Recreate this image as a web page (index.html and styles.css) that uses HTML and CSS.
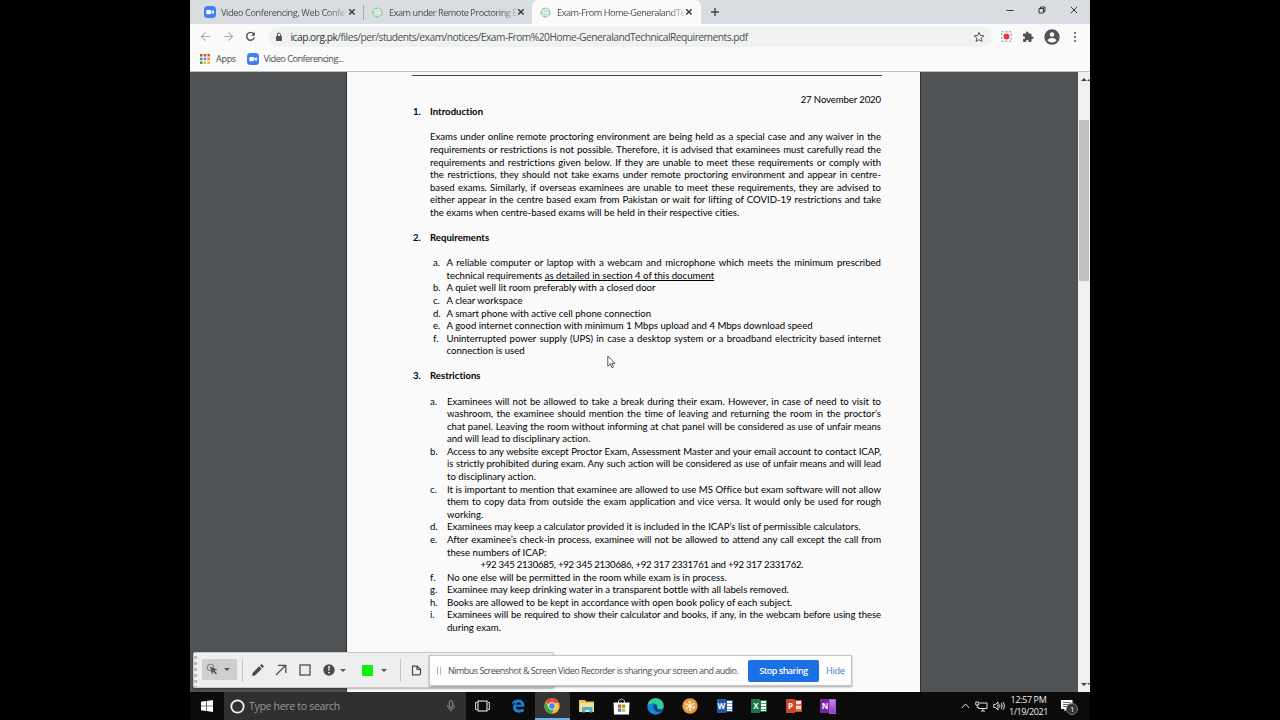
FILE: index.html
```html
<!DOCTYPE html>
<html lang="en">
<head>
  <meta charset="UTF-8">
  <meta name="viewport" content="width=device-width, initial-scale=1.0">
  <title>Exam-From Home-GeneralandTechnicalRequirements</title>
  <link rel="stylesheet" href="styles.css">
</head>
<body>

<div class="screen">
  <div class="tab-strip">
    <div class="tab">
      <svg class="favicon" viewBox="0 0 12 12"><rect width="12" height="12" rx="3.5" fill="#3f82ee"/><rect x="2.3" y="4" width="4.8" height="4.2" rx="1" fill="#fff"/><path d="M7.5 5.6 9.8 4v4.2L7.5 6.7z" fill="#fff"/></svg>
      <span class="tab-title">Video Conferencing, Web Confe</span>
      <svg class="tab-close" viewBox="0 0 8 8"><path d="M1.2 1.2l5.4 5.4M6.6 1.2L1.2 6.6"/></svg>
    </div>
    <div class="tab second">
      <svg class="favicon" viewBox="0 0 12 12"><circle cx="6" cy="6" r="4.8" fill="#e4f1e9" stroke="#7cc79b" stroke-width="1.2" stroke-dasharray="5 1"/><path d="M3.5 6.5Q6 2 8.5 6M4.5 8.5h3" fill="none" stroke="#a3d5b7"/></svg>
      <span class="tab-title">Exam under Remote Proctoring E</span>
      <svg class="tab-close" viewBox="0 0 8 8"><path d="M1.2 1.2l5.4 5.4M6.6 1.2L1.2 6.6"/></svg>
    </div>
    <div class="tab current">
      <svg class="favicon" viewBox="0 0 12 12"><circle cx="6" cy="6" r="4.8" fill="#e4f1e9" stroke="#7cc79b" stroke-width="1.2" stroke-dasharray="5 1"/><path d="M3.5 6.5Q6 2 8.5 6M4.5 8.5h3" fill="none" stroke="#a3d5b7"/></svg>
      <span class="tab-title">Exam-From Home-GeneralandTe</span>
      <svg class="tab-close" viewBox="0 0 8 8"><path d="M1.2 1.2l5.4 5.4M6.6 1.2L1.2 6.6"/></svg>
    </div>
    <svg class="new-tab" viewBox="0 0 10 10"><path d="M5 1v8M1 5h8"/></svg>
    <div class="window-buttons">
      <svg viewBox="0 0 8 8"><path d="M.5 4.5h7"/></svg>
      <svg viewBox="0 0 8 8"><path d="M1 2.5h4.5V7H1zM2.5 2.5V1H7v4.5H5.5"/></svg>
      <svg viewBox="0 0 8 8"><path d="M.8.8l6.4 6.4M7.2.8L.8 7.2"/></svg>
    </div>
  </div>

  <div class="toolbar">
    <svg class="nav-icon off" viewBox="0 0 12 12"><path d="M11 6H1.5M6 1.5L1.5 6 6 10.5"/></svg>
    <svg class="nav-icon off" viewBox="0 0 12 12"><path d="M1 6h9.5M6 1.5L10.5 6 6 10.5"/></svg>
    <svg class="nav-icon" viewBox="0 0 12 12"><path d="M9.6 3.2A4.3 4.3 0 1 0 10.3 7"/><path d="M10.8 1v4.2H6.6z" class="solid"/></svg>
    <div class="address">
      <svg class="lock" viewBox="0 0 8 10"><rect x="1" y="4" width="6" height="5" rx=".6" fill="#555"/><path d="M2.4 4V2.7a1.6 1.6 0 0 1 3.2 0V4" fill="none" stroke="#555" stroke-width="1"/></svg>
      <span class="url"><b>icap.org.pk</b>/files/per/students/exam/notices/Exam-From%20Home-GeneralandTechnicalRequirements.pdf</span>
      <svg class="star" viewBox="0 0 12 12"><path d="M6 1.3l1.4 3.2 3.5.3-2.7 2.3.8 3.4-3-1.8-3 1.8.8-3.4L1.1 4.8l3.5-.3z"/></svg>
    </div>
    <div class="extensions">
      <svg width="11" height="11" viewBox="0 0 11 11"><rect x=".8" y=".8" width="9.4" height="9.4" fill="none" stroke="#4d8c91" stroke-width="1" stroke-dasharray="1.8 2"/><circle cx="5.5" cy="5.5" r="3" fill="#e53943"/></svg>
      <svg width="12" height="12" viewBox="0 0 24 24"><path fill="#4f5256" d="M20.5 11H19V7a2 2 0 0 0-2-2h-4V3.5a2.5 2.5 0 0 0-5 0V5H4a2 2 0 0 0-2 2v3.8h1.5a2.7 2.7 0 0 1 0 5.4H2V20a2 2 0 0 0 2 2h3.8v-1.5a2.7 2.7 0 0 1 5.4 0V22H17a2 2 0 0 0 2-2v-4h1.5a2.5 2.5 0 0 0 0-5z"/></svg>
      <svg width="16" height="16" viewBox="0 0 16 16"><circle cx="8" cy="8" r="7.7" fill="#4f5256"/><circle cx="8" cy="5.5" r="2.3" fill="#fafafa"/><path d="M3.3 11.2Q4.8 9 8 9t4.7 2.2Q11 13.5 8 13.5t-4.7-2.3z" fill="#fafafa"/></svg>
      <svg class="menu" width="4" height="12" viewBox="0 0 4 12"><g fill="#4f5256"><circle cx="2" cy="2" r="1"/><circle cx="2" cy="6" r="1"/><circle cx="2" cy="10" r="1"/></g></svg>
    </div>
  </div>

  <div class="bookmarks">
    <svg width="10" height="10" viewBox="0 0 10 10"><g fill="#dc4437"><path d="M0 0h2.5v2.5H0zM3.7 0h2.5v2.5H3.7zM7.4 0h2.5v2.5H7.4z"/></g><path fill="#3b9b58" d="M0 3.7h2.5v2.5H0z"/><path fill="#4285f4" d="M3.7 3.7h2.5v2.5H3.7z"/><path fill="#e98a1d" d="M7.4 3.7h2.5v2.5H7.4z"/><path fill="#3b9b58" d="M0 7.4h2.5v2.5H0z"/><path fill="#f0b51c" d="M3.7 7.4h2.5v2.5H3.7zM7.4 7.4h2.5v2.5H7.4z"/></svg>
    <span class="apps">Apps</span>
    <svg class="favicon" viewBox="0 0 12 12"><rect width="12" height="12" rx="3.5" fill="#3f82ee"/><rect x="2.3" y="4" width="4.8" height="4.2" rx="1" fill="#fff"/><path d="M7.5 5.6 9.8 4v4.2L7.5 6.7z" fill="#fff"/></svg>
    <span class="bookmark">Video Conferencing...</span>
  </div>

  <div class="viewer">
    <div class="page">
      <div class="rule"></div>
      <div class="date">27 November 2020</div>

      <h2><span>1.</span>Introduction</h2>
      <div class="paragraph">
        <p class="full">Exams under online remote proctoring environment are being held as a special case and any waiver in the</p>
        <p class="full">requirements or restrictions is not possible. Therefore, it is advised that examinees must carefully read the</p>
        <p class="full">requirements and restrictions given below. If they are unable to meet these requirements or comply with</p>
        <p class="full">the restrictions, they should not take exams under remote proctoring environment and appear in centre-</p>
        <p class="full">based exams. Similarly, if overseas examinees are unable to meet these requirements, they are advised to</p>
        <p class="full">either appear in the centre based exam from Pakistan or wait for lifting of COVID-19 restrictions and take</p>
        <p>the exams when centre-based exams will be held in their respective cities.</p>
      </div>

      <h2><span>2.</span>Requirements</h2>
      <div class="list requirements">
        <div class="item"><span>a.</span><div>
          <p class="full">A reliable computer or laptop with a webcam and microphone which meets the minimum prescribed</p>
          <p>technical requirements <u>as detailed in section 4 of this document</u></p>
        </div></div>
        <div class="item"><span>b.</span><div><p>A quiet well lit room preferably with a closed door</p></div></div>
        <div class="item"><span>c.</span><div><p>A clear workspace</p></div></div>
        <div class="item"><span>d.</span><div><p>A smart phone with active cell phone connection</p></div></div>
        <div class="item"><span>e.</span><div><p>A good internet connection with minimum 1 Mbps upload and 4 Mbps download speed</p></div></div>
        <div class="item"><span>f.</span><div>
          <p class="full">Uninterrupted power supply (UPS) in case a desktop system or a broadband electricity based internet</p>
          <p>connection is used</p>
        </div></div>
      </div>

      <h2><span>3.</span>Restrictions</h2>
      <div class="list">
        <div class="item"><span>a.</span><div>
          <p class="full">Examinees will not be allowed to take a break during their exam. However, in case of need to visit to</p>
          <p class="full">washroom, the examinee should mention the time of leaving and returning the room in the proctor’s</p>
          <p class="full">chat panel. Leaving the room without informing at chat panel will be considered as use of unfair means</p>
          <p>and will lead to disciplinary action.</p>
        </div></div>
        <div class="item"><span>b.</span><div>
          <p class="full tight">Access to any website except Proctor Exam, Assessment Master and your email account to contact ICAP,</p>
          <p class="full tight">is strictly prohibited during exam. Any such action will be considered as use of unfair means and will lead</p>
          <p>to disciplinary action.</p>
        </div></div>
        <div class="item"><span>c.</span><div>
          <p class="full">It is important to mention that examinee are allowed to use MS Office but exam software will not allow</p>
          <p class="full">them to copy data from outside the exam application and vice versa. It would only be used for rough</p>
          <p>working.</p>
        </div></div>
        <div class="item"><span>d.</span><div><p>Examinees may keep a calculator provided it is included in the ICAP’s list of permissible calculators.</p></div></div>
        <div class="item"><span>e.</span><div>
          <p class="full tight">After examinee’s check-in process, examinee will not be allowed to attend any call except the call from</p>
          <p>these numbers of ICAP:</p>
          <p class="phones">+92 345 2130685, +92 345 2130686, +92 317 2331761 and +92 317 2331762.</p>
        </div></div>
        <div class="item"><span>f.</span><div><p>No one else will be permitted in the room while exam is in process.</p></div></div>
        <div class="item"><span>g.</span><div><p>Examinee may keep drinking water in a transparent bottle with all labels removed.</p></div></div>
        <div class="item"><span>h.</span><div><p>Books are allowed to be kept in accordance with open book policy of each subject.</p></div></div>
        <div class="item"><span>i.</span><div>
          <p class="full tight">Examinees will be required to show their calculator and books, if any, in the webcam before using these</p>
          <p>during exam.</p>
        </div></div>
      </div>
    </div>

    <div class="scrollbar">
      <svg viewBox="0 0 12 6"><path d="M3 5l3-3 3 3zM9 5l2-2 1 1v1z"/></svg>
      <div class="thumb"></div>
      <svg viewBox="0 0 12 6"><path d="M3 1l3 3 3-3zM9 1l2 2 1-1V1z"/></svg>
    </div>
  </div>

  <div class="draw-tools">
    <div class="grip"></div>
    <div class="pick">
      <svg width="13" height="13" viewBox="0 0 13 13"><circle cx="4.5" cy="4.5" r="3.3" fill="none" stroke="#777"/><path d="M4 3.5l7.5 3.3-3 1 2.5 2.7-1.2 1-2.4-2.7-1.5 2.4z" fill="#555"/></svg>
      <i class="caret"></i>
    </div>
    <div class="divider"></div>
    <svg class="pencil" width="13" height="13" viewBox="0 0 13 13"><path d="M1 12l.8-3.3 6.4-6.4 2.5 2.5-6.4 6.4zM9 1.5l1-1q.6-.5 1.3.1l1.1 1.1q.6.7.1 1.3l-1 1z" fill="#4a4a4a"/></svg>
    <svg class="arrow" width="12" height="12" viewBox="0 0 12 12"><path d="M1 11L10.5 1.5M3 1.3h7.8V9" fill="none" stroke="#4a4a4a" stroke-width="1.3"/></svg>
    <svg class="square" width="12" height="12" viewBox="0 0 12 12"><rect x="1" y="1" width="10" height="10" fill="none" stroke="#4a4a4a" stroke-width="1.3"/></svg>
    <svg class="alert" width="12" height="12" viewBox="0 0 12 12"><circle cx="6" cy="6" r="5.7" fill="#4a4a4a"/><path d="M5.2 2h1.6l-.3 5h-1zM5.2 8h1.6v1.5H5.2z" fill="#eee"/></svg>
    <i class="caret"></i>
    <div class="swatch"></div>
    <i class="caret"></i>
    <div class="divider last"></div>
    <svg class="file" width="11" height="11" viewBox="0 0 11 11"><path d="M1.5 9.8V1.2h4.7l3.3 3v4.3q0 1.3-1.3 1.3zM6 1.5v3h3.5" fill="none" stroke="#44495f" stroke-width="1.2"/></svg>
  </div>

  <div class="share-bar">
    <div class="share-grip"></div>
    <span class="share-text">Nimbus Screenshot &amp; Screen Video Recorder is sharing your screen and audio.</span>
    <button class="stop">Stop sharing</button>
    <a class="hide">Hide</a>
  </div>

  <svg class="cursor" viewBox="0 0 9 14"><path d="M.8 1v10.2l2.5-2.3 1.7 3.9 1.5-.7-1.7-3.7H8z"/></svg>

  <div class="taskbar">
    <div class="start"><svg width="12" height="12" viewBox="0 0 12 12"><path d="M0 1.7L5 1v4.7H0zM5.6.9L12 0v5.7H5.6zM0 6.3h5V11l-5-.7zM5.6 6.3H12V12l-6.4-.9z" fill="#fff"/></svg></div>
    <div class="search">
      <svg width="15" height="15" viewBox="0 0 15 15"><circle cx="7.5" cy="7.5" r="6.2" fill="none" stroke="#f2f2f2" stroke-width="1.8"/></svg>
      <span>Type here to search</span>
      <svg width="8" height="12" viewBox="0 0 8 12"><rect x="2.3" y=".6" width="3.4" height="7" rx="1.7" fill="none" stroke="#999"/><path d="M.7 5v1.2a3.3 3.3 0 0 0 6.6 0V5M4 9.5v2" fill="none" stroke="#888"/></svg>
    </div>
    <div class="task view"><svg width="15" height="12" viewBox="0 0 15 12"><rect x="3" y="1" width="9" height="10" fill="none" stroke="#fff"/><path d="M2 2.5H.6v7H2M13 2.5h1.4v7H13" fill="none" stroke="#ddd"/></svg></div>
    <div class="task"><svg width="14" height="14" viewBox="0 0 14 14"><path d="M.5 6.2Q1.5.4 7.3.4q6.2.2 6.3 7.3H4.8q.3 3 3.9 3 2.2 0 4-1.1v3Q10.8 13.7 8 13.7 2 13.5 2 8q.1-3 3-4.6Q2 4 .5 6.2zM5 5.7h5.2Q10 3.2 7.6 3.2 5.3 3.3 5 5.7z" fill="#1683dc"/></svg></div>
    <div class="task open"><svg width="16" height="16" viewBox="0 0 16 16"><circle cx="8" cy="8" r="7.7" fill="#f4c42c"/><path d="M8 8L1.3 4.2A7.7 7.7 0 0 1 14.7 4.2L15 5H8z" fill="#e34a3a"/><path d="M1.3 4.2A7.7 7.7 0 0 0 7.7 15.7L10.7 9.8 8 8 4.8 9.5z" fill="#37a355"/><circle cx="8" cy="8" r="3.7" fill="#fff"/><circle cx="8" cy="8" r="2.9" fill="#4487ef"/></svg></div>
    <div class="task"><svg width="16" height="14" viewBox="0 0 16 14"><path d="M0 1h6l1 1.5h8V13H0z" fill="#eac35a"/><path d="M1 4h14v9H1z" fill="#f7df91"/><path d="M3 8h10.5v5.5h-3V11H6v2.5H3z" fill="#4bb3d2"/></svg></div>
    <div class="task"><svg width="17" height="17" viewBox="0 0 17 17"><path d="M5.5 5V2.5Q8.5-.5 11.5 2.5V5" fill="none" stroke="#bbb"/><path d="M.5 4.5h16l-.5 12H1z" fill="#fff"/><path d="M5 6.5h3.3v3.3H5z" fill="#e44f2b"/><path d="M9 6.5h3.3v3.3H9z" fill="#7db52c"/><path d="M5 10.5h3.3v3.3H5z" fill="#258fd9"/><path d="M9 10.5h3.3v3.3H9z" fill="#efb51f"/></svg></div>
    <div class="task"><svg width="17" height="17" viewBox="0 0 17 17"><circle cx="8.5" cy="8.5" r="8.2" fill="#1686d3"/><path d="M.5 7Q2 .3 8.5.3q7.5.2 8.2 7.5 0 3.2-3.5 3.5-3.7 0-3-2.3Q10 5.5 6 5.2 2.5 5.2.5 7z" fill="#3dca9a"/><path d="M6.2 7Q8.5 5 10.3 8q-.8 2.5 1.2 3.2 2.5.8 4.5-.4-1 3-4.5 3.6Q6 13.5 6.2 7z" fill="#0b4a8f"/></svg></div>
    <div class="task"><svg width="16" height="16" viewBox="0 0 16 16"><circle cx="8" cy="8" r="7.7" fill="#e9993a"/><path d="M8 3v10M3.7 5.5l8.6 5M12.3 5.5l-8.6 5" stroke="#fff2dd" stroke-width="1.3"/><circle cx="8" cy="8" r="4.5" fill="none" stroke="#fff2dd" stroke-dasharray="2 2.7"/></svg></div>
    <div class="task office word"><b>W</b><i></i></div>
    <div class="task office excel"><b>X</b><i></i></div>
    <div class="task office point"><b>P</b><i></i></div>
    <div class="task office note"><b>N</b><i></i></div>
    <div class="tray">
      <svg width="9" height="6" viewBox="0 0 9 6"><path d="M.8 5l3.7-4 3.7 4"/></svg>
      <svg width="13" height="11" viewBox="0 0 13 11"><path d="M4.5 2H12v5.5H3.5V6M6 10h4M8 7.5V10M.8 1h3v3h-3zM2.3 4v3"/></svg>
      <svg width="12" height="10" viewBox="0 0 12 10"><path d="M.7 3.5h1.8L5 1v8L2.5 6.5H.7zM6.5 3.5q1.2 1.5 0 3M8.2 2.2q2.3 2.8 0 5.6M9.8 1q3.2 4 0 8"/></svg>
    </div>
    <div class="clock"><span>12:57 PM</span><span>1/19/2021</span></div>
    <div class="notice">
      <svg width="12" height="12" viewBox="0 0 12 12"><path d="M0 0h11.5v9H6L3.5 11.5V9H0z" fill="#fff"/><path d="M2 2.5h7.5M2 4.5h7.5M2 6.5h5" stroke="#333" stroke-width=".7"/></svg>
      <span class="badge">1</span>
    </div>
  </div>
</div>

</body>
</html>
```
FILE: styles.css
```css
* {
  box-sizing: border-box;
}

body {
  margin: 0;
  background-color: #000;
  font-family: "Open Sans", "Noto Sans", sans-serif;
}

svg {
  display: block;
  flex: none;
}

.screen {
  position: relative;
  width: 900px;
  height: 720px;
  margin: 0 auto;
  display: flex;
  flex-direction: column;
  overflow: hidden;
  color: #4b4e52;
  font-size: 9.2px;
  letter-spacing: -0.4px;
}

/* browser chrome */
.tab-strip {
  height: 24px;
  display: flex;
  align-items: center;
  background-color: #d9dce1;
}

.tab {
  width: 174px;
  height: 24px;
  padding: 0 7px 0 14px;
  display: flex;
  align-items: center;
  border-right: 1px solid #a5a8ad;
  border-image: linear-gradient(transparent 25%, #a5a8ad 25%, #a5a8ad 80%, transparent 80%) 1;
}

.tab.second {
  width: 168px;
  padding-left: 8px;
  border: 0;
}

.tab.current {
  width: 169px;
  padding: 0 8px 0 8px;
  border: 0;
  border-radius: 6px 6px 0 0;
  background-color: #fafafa;
}

.favicon {
  width: 12px;
  height: 12px;
}

.tab:not(:first-child) .favicon {
  width: 11px;
  height: 11px;
}

.tab-title {
  margin-left: 5px;
  white-space: nowrap;
  -webkit-mask-image: linear-gradient(90deg, #000 86%, rgba(0, 0, 0, 0.2));
  mask-image: linear-gradient(90deg, #000 86%, rgba(0, 0, 0, 0.2));
}

.second .tab-title,
.current .tab-title {
  margin-left: 6px;
  letter-spacing: -0.47px;
}

.tab-close {
  width: 8px;
  height: 8px;
  margin-left: auto;
  stroke: #35373a;
  stroke-width: 1.4;
}

.new-tab {
  width: 10px;
  height: 10px;
  margin-left: 9px;
  stroke: #444;
  stroke-width: 1.4;
}

.window-buttons {
  display: flex;
  gap: 24px;
  margin: -4px 12px 0 auto;
}

.window-buttons svg {
  width: 8px;
  height: 8px;
  fill: none;
  stroke: #222;
  stroke-width: 0.9;
}

.toolbar {
  height: 25px;
  padding: 0 13px 0 10px;
  display: flex;
  align-items: center;
  background-color: #fafafa;
}

.nav-icon {
  width: 11px;
  height: 11px;
  margin-right: 11.5px;
  fill: none;
  stroke: #4b4d50;
  stroke-width: 1.5;
}

.nav-icon.off {
  stroke: #aaa;
  stroke-width: 1.2;
}

.nav-icon .solid {
  fill: #4b4d50;
  stroke: none;
}

.address {
  width: 724px;
  height: 20px;
  padding: 0 7px 0 7px;
  display: flex;
  align-items: center;
  border-radius: 10px;
  background-color: #f0f2f2;
}

.lock {
  width: 8px;
  height: 10px;
}

.url {
  margin-left: 8px;
  font-size: 10.2px;
  letter-spacing: -0.48px;
  white-space: nowrap;
}

.url b {
  font-weight: normal;
  color: #303236;
}

.star {
  width: 12px;
  height: 12px;
  margin-left: auto;
  fill: none;
  stroke: #55585c;
}

.extensions {
  margin-left: auto;
  display: flex;
  align-items: center;
  gap: 10px;
}

.menu {
  margin-left: 3px;
}

.bookmarks {
  height: 23px;
  padding: 0 0 3px 10px;
  display: flex;
  align-items: center;
  background-color: #fafafa;
  border-bottom: 1px solid #bbb;
}

.apps {
  margin: 0 11px 0 6px;
}

.bookmark {
  margin-left: 5px;
  letter-spacing: -0.53px;
}

/* pdf document */
.viewer {
  height: 620px;
  display: flex;
  background-color: #4f5355;
}

.page {
  width: 575px;
  margin-left: 156px;
  padding: 3px 39px 0 66px;
  border: solid #303335;
  border-width: 0 1px;
  background-color: #fafafa;
  color: #000;
  font: 9.6px/12.585px Lato, sans-serif;
  font-variant-ligatures: none;
  letter-spacing: 0;
}

.rule {
  width: 470px;
  height: 1px;
  margin: 0 0 17.7px -1px;
  background-color: #444;
}

.date {
  text-align: right;
  letter-spacing: -0.12px;
}

.page h2 {
  margin: 0 0 12.585px;
  font-size: inherit;
  display: flex;
}

.page h2 span {
  width: 17px;
}

.page p {
  margin: 0;
  white-space: nowrap;
}

.page .full {
  white-space: normal;
  text-align-last: justify;
}

.page .tight {
  letter-spacing: -0.07px;
}

.paragraph {
  margin: 0 0 12.585px 17px;
}

.list {
  margin: 0 0 12.585px 17px;
}

.item {
  display: flex;
}

.item > span {
  width: 17px;
  flex: none;
}

.item > div {
  flex: 1;
}

.requirements {
  margin-left: 20px;
}

.requirements .item > span {
  width: 13.5px;
}

.page .phones {
  padding-left: 33.5px;
  letter-spacing: -0.26px;
}

.scrollbar {
  width: 12px;
  margin-left: auto;
  display: flex;
  flex-direction: column;
  background-color: #f0f0f0;
}

.scrollbar svg {
  width: 12px;
  height: 6px;
  margin: 4px 0;
  fill: #444;
}

.thumb {
  height: 161px;
  margin: 34px 1px auto;
  background-color: #c1c1c1;
}

/* floating bars */
.draw-tools {
  position: absolute;
  left: 3px;
  top: 652px;
  width: 361px;
  height: 36px;
  display: flex;
  align-items: center;
  border: 1px solid #c8c8c8;
  border-radius: 2px;
  background-color: #eee;
  box-shadow: 0 1px 2px rgba(0, 0, 0, 0.3);
}

.grip {
  width: 3px;
  height: 34px;
  background: repeating-linear-gradient(#eee 0 3px, #bbb 3px 6px);
}

.pick {
  width: 35px;
  height: 21px;
  margin: -2px 0 0 5px;
  padding-left: 4px;
  display: flex;
  align-items: center;
  gap: 5px;
  background-color: #cfcfcf;
}

.caret {
  border: solid transparent;
  border-width: 3px 3px 0;
  border-top-color: #555;
}

.divider {
  width: 1px;
  height: 23px;
  margin-left: 5px;
  background-color: #c4c4c4;
}

.pencil {
  margin-left: 8px;
}

.arrow {
  margin-left: 11px;
}

.square {
  margin-left: 12px;
}

.alert {
  margin: 0 5px 0 12px;
}

.swatch {
  width: 11px;
  height: 11px;
  margin: 0 8px 0 16px;
  background-color: #0bf30b;
}

.divider.last {
  margin: 0 10px 0 13px;
}

.share-bar {
  position: absolute;
  left: 239px;
  top: 655px;
  width: 423px;
  height: 31px;
  padding-left: 7px;
  display: flex;
  align-items: center;
  border: 1px solid #c4c4c4;
  background-color: #fdfdfd;
  box-shadow: 0 1px 2px rgba(0, 0, 0, 0.35);
}

.share-grip {
  width: 4px;
  height: 8px;
  border: solid #bbb;
  border-width: 0 1px;
}

.share-text {
  width: 293px;
  margin: 0 7px;
  font-size: 9px;
  letter-spacing: -0.52px;
  white-space: nowrap;
}

.stop {
  width: 71px;
  height: 22px;
  padding: 0;
  border: 0;
  border-radius: 2px;
  background-color: #1a70e4;
  color: #fff;
  font: 600 9px "Open Sans", sans-serif;
  letter-spacing: -0.5px;
}

.hide {
  margin-left: 7px;
  color: #4081bf;
  letter-spacing: -0.3px;
}

.cursor {
  position: absolute;
  left: 417px;
  top: 355px;
  width: 9px;
  height: 14px;
  fill: #fff;
  stroke: #333;
  stroke-width: 0.8;
}

/* windows taskbar */
.taskbar {
  height: 28px;
  display: flex;
  align-items: center;
  background-color: #0b0b0b;
}

.start {
  width: 34px;
  flex: none;
  padding-left: 11px;
}

.search {
  width: 242px;
  height: 28px;
  flex: none;
  padding: 0 11px 0 6px;
  display: flex;
  align-items: center;
  background-color: #303030;
  color: #999;
  font-size: 10.5px;
  letter-spacing: -0.3px;
}

.search span {
  margin: 0 auto 0 4px;
}

.task {
  width: 34.5px;
  height: 28px;
  flex: none;
  display: flex;
  align-items: center;
  justify-content: center;
}

.task.view {
  padding-right: 1px;
}

.task.open {
  background-color: #343434;
  box-shadow: inset 0 -2px #69b1e8;
}

.office b {
  width: 9px;
  height: 14px;
  background-color: #2358a6;
  color: #fff;
  font-size: 8px;
  line-height: 14px;
  text-align: center;
}

.office i {
  width: 7px;
  height: 12px;
  border: 1px solid #2358a6;
  background: repeating-linear-gradient(#fff 0 2px, #7fa0cf 2px 3px);
}

.excel b {
  background-color: #1c7444;
}

.excel i {
  border-color: #1c7444;
  background: repeating-linear-gradient(#fff 0 2px, #57a27b 2px 3px);
}

.point b {
  background-color: #cf4525;
}

.point i {
  border-color: #cf4525;
  background: repeating-linear-gradient(#fbe5df 0 3px, #dc704f 3px 5px);
}

.note b {
  background-color: #7c24a5;
}

.note i {
  height: 15px;
  border-color: #a859cf;
  background: linear-gradient(#c985e8, #8d38b5);
}

.tray {
  margin-left: auto;
  display: flex;
  align-items: center;
  gap: 5px;
}

.tray svg {
  fill: none;
  stroke: #ddd;
}

.clock {
  width: 47px;
  display: flex;
  flex-direction: column;
  align-items: center;
  color: #eee;
  font-size: 9px;
  line-height: 12.5px;
  letter-spacing: -0.38px;
}

.notice {
  position: relative;
  margin: 0 17px 0 9px;
}

.badge {
  position: absolute;
  left: 5px;
  top: 3px;
  width: 12px;
  height: 12px;
  border: 1px solid #777;
  border-radius: 50%;
  background-color: #333;
  color: #fff;
  font-size: 8px;
  line-height: 10px;
  text-align: center;
}
```
